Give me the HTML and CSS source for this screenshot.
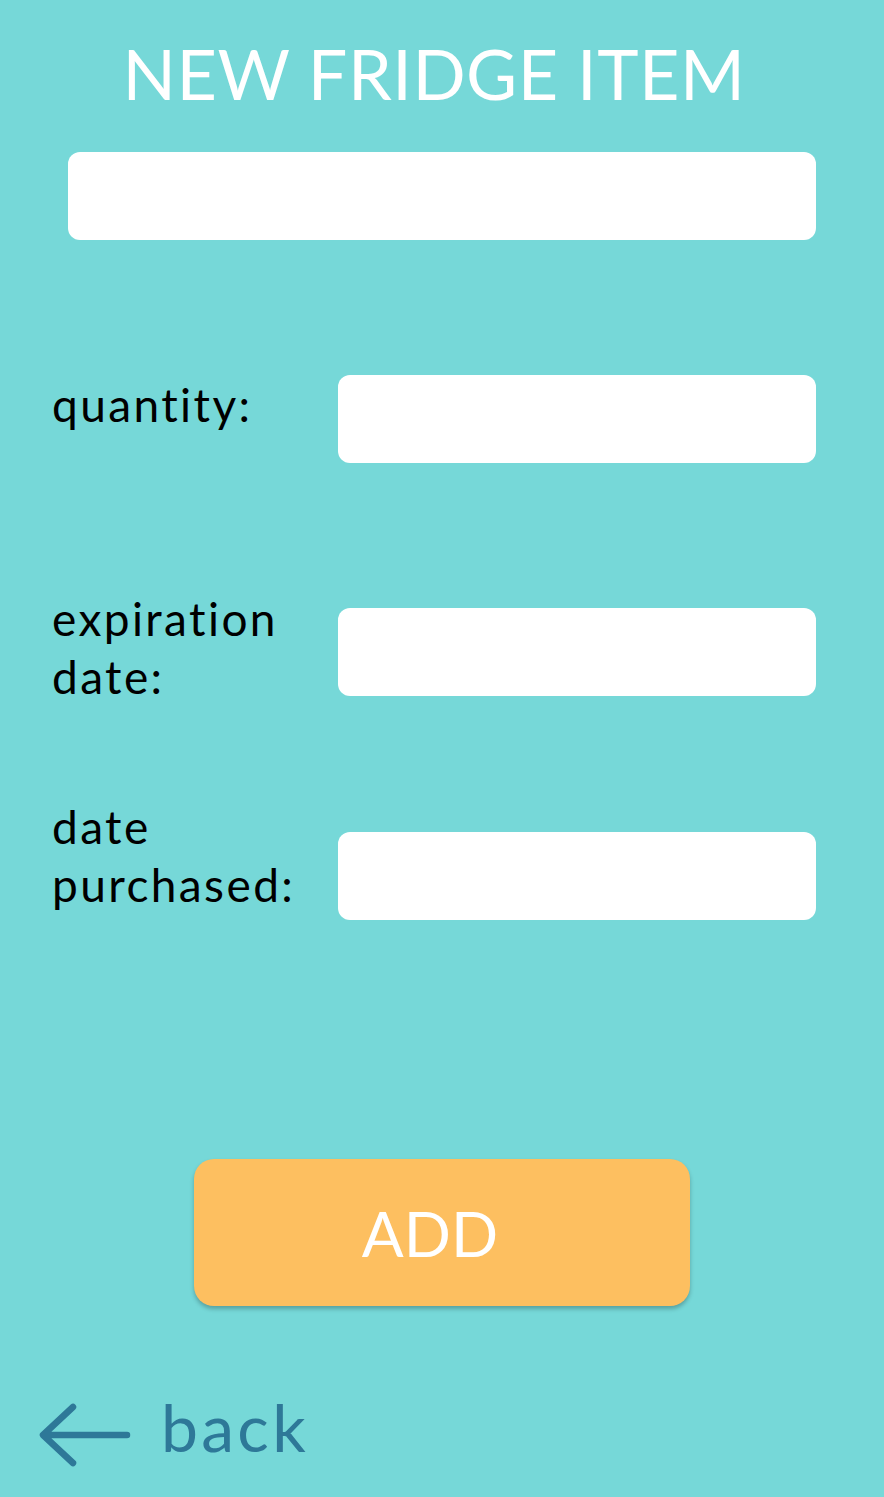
FILE: index.html
```html
<!DOCTYPE html>
<html>
<head>
<meta charset="utf-8">
<link rel="stylesheet" href="styles.css">
</head>
<body>
<div class="page">
  <h1 class="title">NEW FRIDGE ITEM</h1>
  <div class="name-field"></div>
  <div class="form">
    <div class="row row-quantity">
      <div class="label">quantity:</div>
      <div class="field"></div>
    </div>
    <div class="row row-exp">
      <div class="label">expiration<br>date:</div>
      <div class="field"></div>
    </div>
    <div class="row row-purchased">
      <div class="label">date<br>purchased:</div>
      <div class="field"></div>
    </div>
  </div>
  <div class="actions">
    <button class="add-btn">ADD</button>
  </div>
  <div class="back">
    <svg class="back-arrow" width="98" height="70" viewBox="0 0 98 70">
      <path d="M91 35 H8 M37 7 L7 35 L37 63" fill="none" stroke="#2e7898" stroke-width="6.5" stroke-linecap="round" stroke-linejoin="round"/>
    </svg>
    <span class="back-text">back</span>
  </div>
</div>
</body>
</html>
```
FILE: styles.css
```css
html, body {
  margin: 0;
  padding: 0;
}
body {
  background: #76d8d8;
  font-family: "Lato", "Noto Sans", sans-serif;
  width: 884px;
  height: 1497px;
  overflow: hidden;
}
.page {
  display: flex;
  flex-direction: column;
  height: 1497px;
}
.page > * {
  flex-shrink: 0;
}
.title {
  margin: 33px 0 0 0;
  padding-right: 16px;
  text-align: center;
  color: #ffffff;
  font-weight: 400;
  font-size: 70px;
  line-height: 80px;
  letter-spacing: 0.5px;
}
.name-field {
  margin: 39px 68px 0 68px;
  height: 88px;
  background: #ffffff;
  border-radius: 12px;
}
.form {
  display: flex;
  flex-direction: column;
  margin: 135px 68px 0 52px;
}
.row {
  display: grid;
  grid-template-columns: 286px 1fr;
  align-items: start;
}
.row-exp {
  margin-top: 127px;
}
.row-purchased {
  margin-top: 92px;
}
.label {
  font-size: 46px;
  line-height: 58px;
  letter-spacing: 2.4px;
  color: #000000;
}
.row-quantity .label {
  margin-top: 1px;
}
.row-exp .field {
  margin-top: 18px;
}
.row-purchased .field {
  margin-top: 34px;
}
.field {
  height: 88px;
  background: #ffffff;
  border-radius: 12px;
}
.actions {
  display: flex;
  justify-content: center;
  margin-top: 239px;
}
.add-btn {
  width: 496px;
  height: 147px;
  border: none;
  border-radius: 20px;
  background: #fdbf60;
  color: #ffffff;
  font-family: "Lato", "Noto Sans", sans-serif;
  font-size: 62px;
  padding: 0 24px 0 0;
  box-shadow: 0 3px 4px rgba(0, 0, 0, 0.25);
}
.back {
  display: flex;
  align-items: flex-start;
  gap: 27px;
  margin: 86px 0 0 36px;
}
.back-arrow {
  display: block;
  margin-top: 8px;
}
.back-text {
  color: #2e7898;
  font-size: 66px;
  line-height: 70px;
  letter-spacing: 3.3px;
}
```
